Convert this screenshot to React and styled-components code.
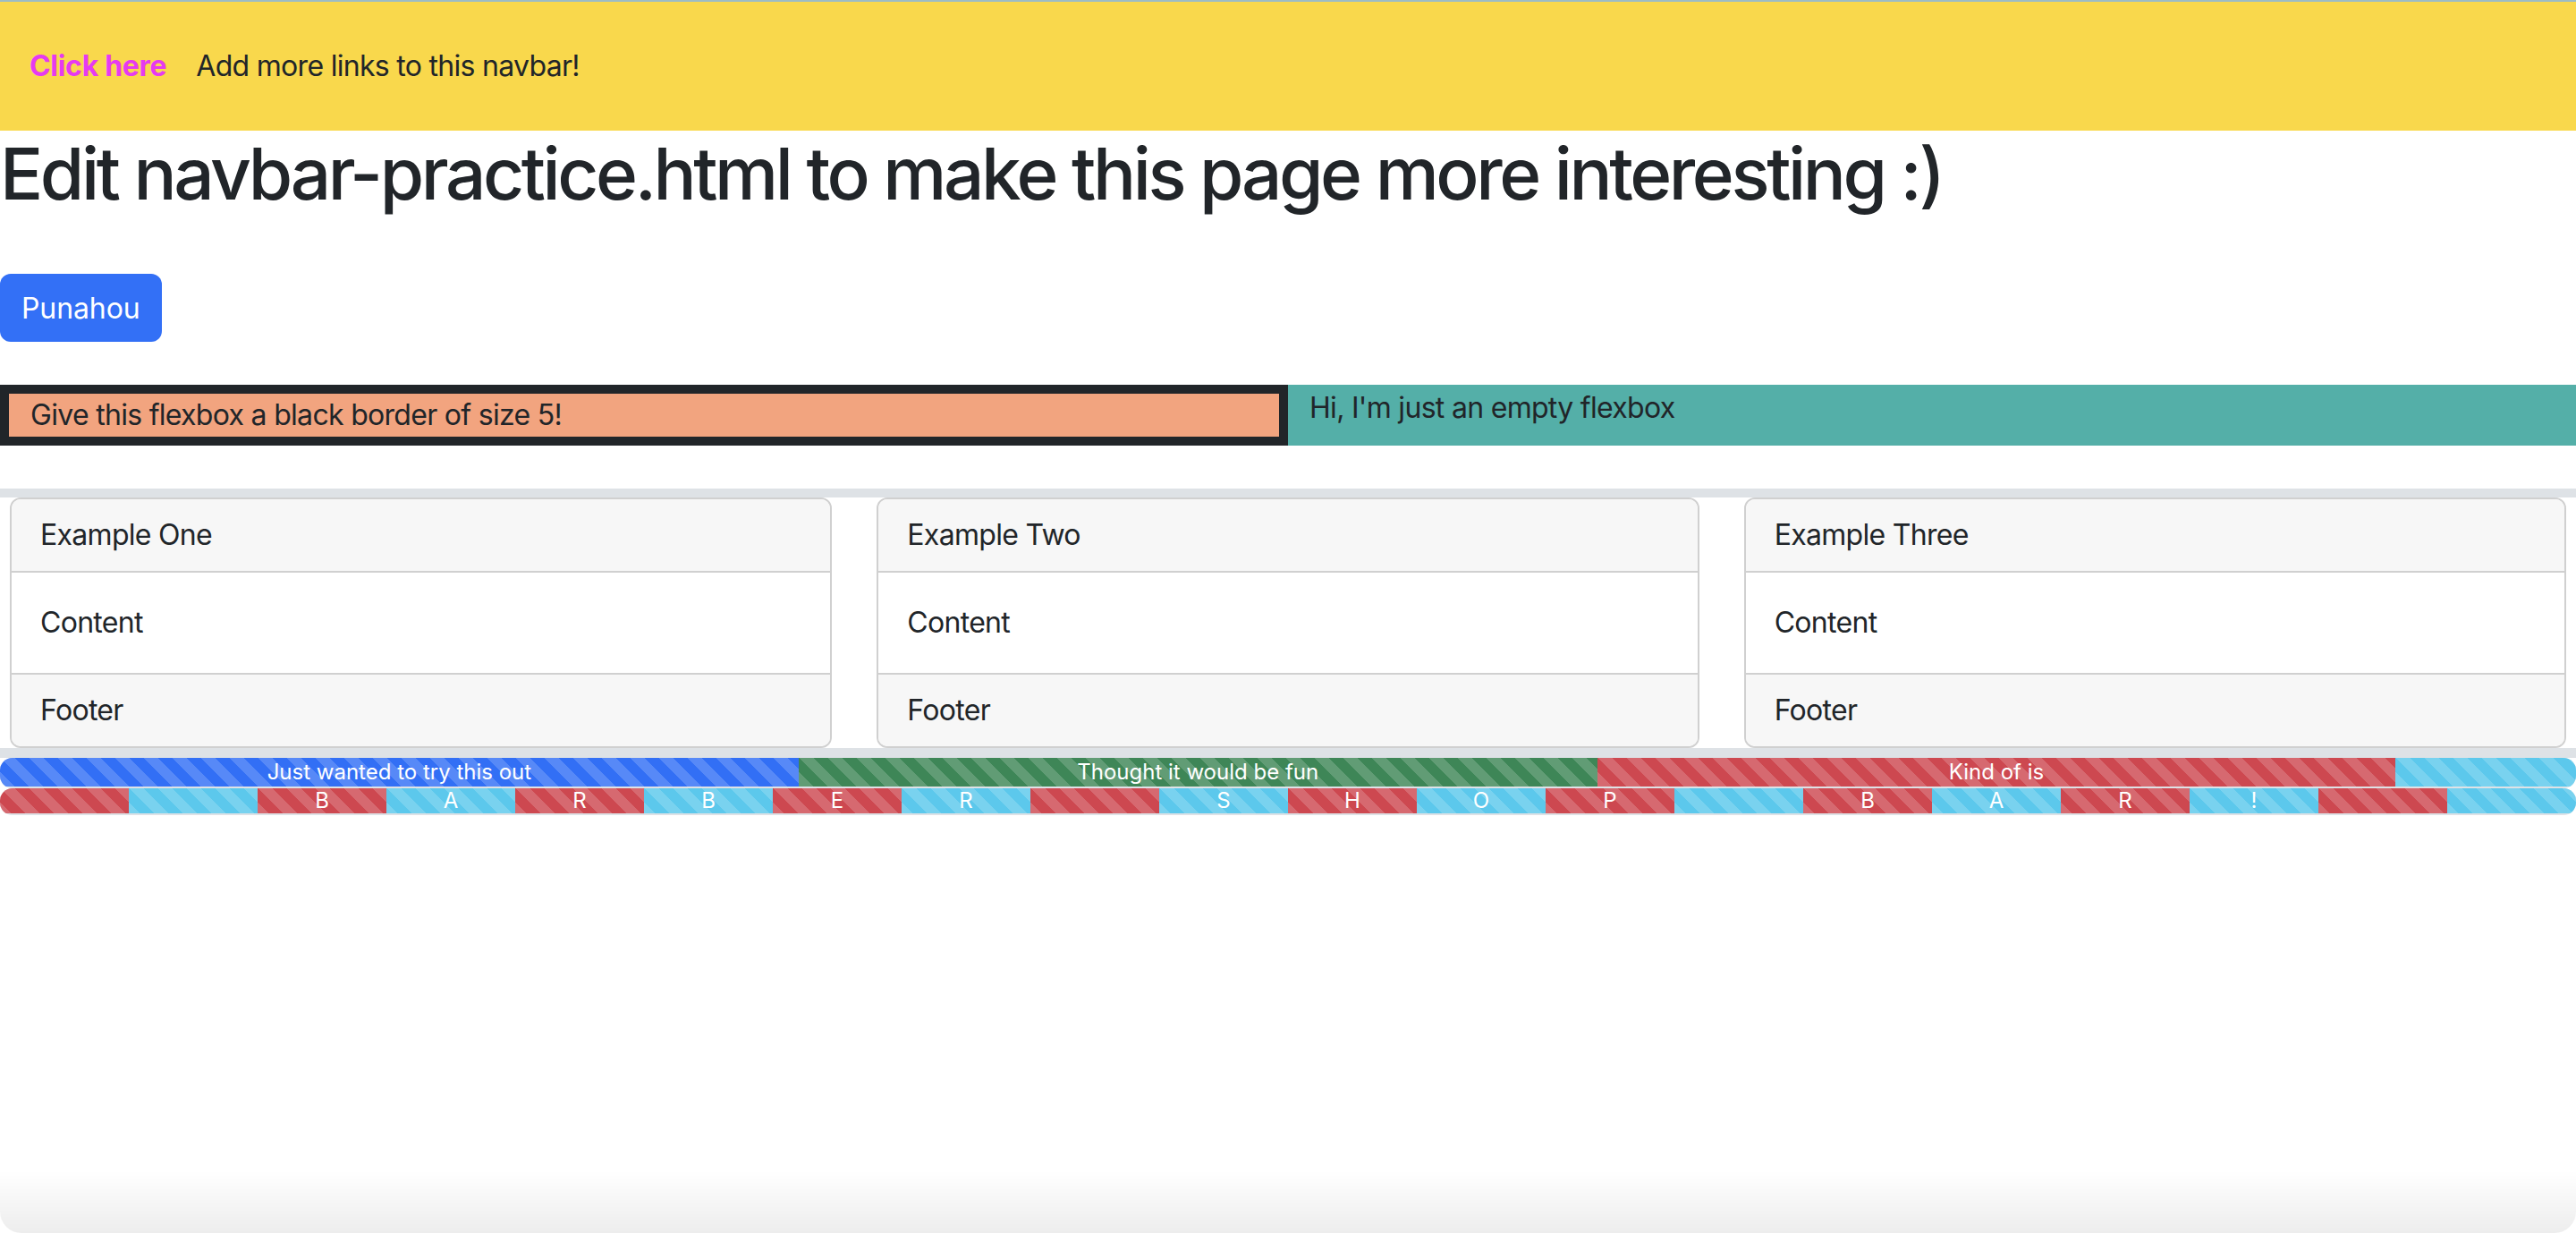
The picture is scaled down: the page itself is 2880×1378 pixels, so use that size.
import React from "react";
import styled, { createGlobalStyle } from "styled-components";

const Global = createGlobalStyle`
  html, body { margin: 0; padding: 0; background: #fff; }
  body {
    font-family: Inter, "Noto Sans", "Liberation Sans", sans-serif;
    color: #212529;
    font-size: 32px;
    line-height: 1.5;
    letter-spacing: -0.7px;
  }
  * { box-sizing: border-box; }
`;

const Page = styled.div`
  display: flex;
  flex-direction: column;
  min-height: 1378px;
`;

const Navbar = styled.nav`
  display: flex;
  align-items: center;
  gap: 33px;
  height: 146px;
  padding: 0 33px;
  background: #f9d84c;
  border-top: 2px solid #9dbcc4;
`;

const Brand = styled.a`
  color: #e63af1;
  font-weight: 700;
  font-size: 32px;
  text-decoration: none;
  letter-spacing: -0.3px;
`;

const NavLink = styled.a`
  color: #212529;
  font-size: 32px;
  text-decoration: none;
`;

const Title = styled.h1`
  margin: 0;
  font-size: 80px;
  line-height: 96px;
  font-weight: 500;
  letter-spacing: -3.4px;
`;

const Button = styled.button`
  align-self: flex-start;
  margin-top: 64px;
  height: 76px;
  padding: 0 24px;
  border: 0;
  border-radius: 12px;
  background: #3370f6;
  color: #fff;
  font-family: inherit;
  font-size: 32px;
  letter-spacing: -0.1px;
`;

const FlexRow = styled.div`
  display: flex;
  margin-top: 48px;
`;

const FlexItem = styled.div`
  flex: 0 0 50%;
  height: 68px;
  display: flex;
  align-items: ${(p) => (p.$top ? "flex-start" : "center")};
  padding: ${(p) => (p.$top ? "2px 24px 0" : "0 24px")};
  background: ${(p) => p.$bg};
  border: ${(p) => (p.$bordered ? "10px solid #212529" : "none")};
`;

const CardBand = styled.section`
  margin-top: 48px;
  border-top: 10px solid #dee2e6;
  border-bottom: 11px solid #dee2e6;
  display: grid;
  grid-template-columns: repeat(3, 1fr);
  column-gap: 50px;
  padding: 0 11px;
`;

const Card = styled.div`
  display: flex;
  flex-direction: column;
  border: 2px solid #d0d0d0;
  border-radius: 12px;
  overflow: hidden;
`;

const CardHead = styled.div`
  padding: 16px 32px;
  background: #f7f7f7;
  border-bottom: 2px solid #d0d0d0;
`;

const CardBody = styled.div`
  padding: 32px;
  background: #fff;
`;

const CardFoot = styled.div`
  padding: 16px 32px;
  background: #f7f7f7;
  border-top: 2px solid #d0d0d0;
`;

const Progress = styled.div`
  display: flex;
  align-items: flex-start;
  height: ${(p) => p.$h + 2}px;
  background: #dee2e6;
  border-radius: 14px;
  overflow: hidden;
`;

const stripes = `linear-gradient(45deg, rgba(255,255,255,.18) 25%, transparent 25%, transparent 50%, rgba(255,255,255,.18) 50%, rgba(255,255,255,.18) 75%, transparent 75%, transparent)`;

const Segment = styled.div`
  width: ${(p) => p.$w}%;
  height: ${(p) => p.$h}px;
  display: flex;
  align-items: center;
  justify-content: center;
  background-color: ${(p) => p.$color};
  background-image: ${stripes};
  background-size: 32px 32px;
  color: #fff;
  font-size: 24px;
  line-height: 1;
  letter-spacing: 0;
  white-space: nowrap;
`;

const BottomFade = styled.div`
  position: fixed;
  left: 0;
  right: 0;
  bottom: 0;
  height: 70px;
  pointer-events: none;
  background: linear-gradient(to bottom, rgba(0,0,0,0), rgba(0,0,0,0.07));
  border-radius: 0 0 24px 24px;
`;

const C = {
  blue: "#326ff5",
  green: "#3e8657",
  red: "#cd4850",
  info: "#5cc8ec",
};

const letters = ["", "", "B", "A", "R", "B", "E", "R", "", "S", "H", "O", "P", "", "B", "A", "R", "!", "", ""];

export default function App() {
  return (
    <Page>
      <Global />
      <Navbar>
        <Brand href="#">Click here</Brand>
        <NavLink href="#">Add more links to this navbar!</NavLink>
      </Navbar>
      <Title>Edit navbar-practice.html to make this page more interesting :)</Title>
      <Button>Punahou</Button>
      <FlexRow>
        <FlexItem $bg="#f2a47f" $bordered>Give this flexbox a black border of size 5!</FlexItem>
        <FlexItem $bg="#54afa8" $top>Hi, I'm just an empty flexbox</FlexItem>
      </FlexRow>
      <CardBand>
        {["Example One", "Example Two", "Example Three"].map((t) => (
          <Card key={t}>
            <CardHead>{t}</CardHead>
            <CardBody>Content</CardBody>
            <CardFoot>Footer</CardFoot>
          </Card>
        ))}
      </CardBand>
      <Progress $h={32}>
        <Segment $w={31} $h={32} $color={C.blue}>Just wanted to try this out</Segment>
        <Segment $w={31} $h={32} $color={C.green}>Thought it would be fun</Segment>
        <Segment $w={31} $h={32} $color={C.red}>Kind of is</Segment>
        <Segment $w={7} $h={32} $color={C.info} />
      </Progress>
      <Progress $h={28}>
        {letters.map((l, i) => (
          <Segment key={i} $w={5} $h={28} $color={i % 2 === 0 ? C.red : C.info}>{l}</Segment>
        ))}
      </Progress>
      <BottomFade />
    </Page>
  );
}
